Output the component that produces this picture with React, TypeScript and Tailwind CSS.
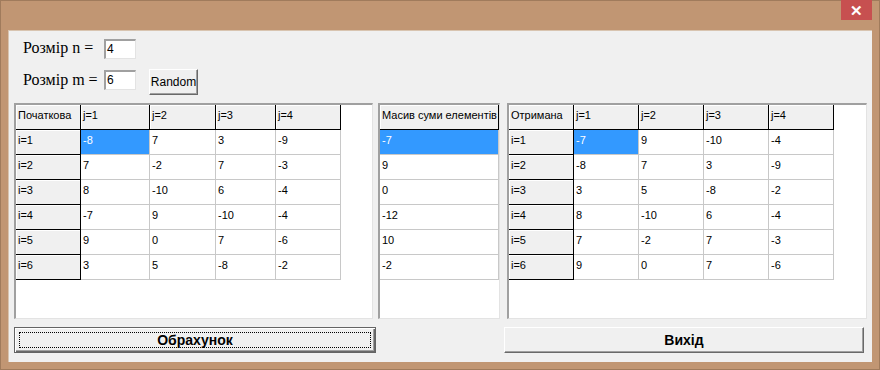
import React from "react";

const initial = [
  ["-8", "7", "3", "-9"],
  ["7", "-2", "7", "-3"],
  ["8", "-10", "6", "-4"],
  ["-7", "9", "-10", "-4"],
  ["9", "0", "7", "-6"],
  ["3", "5", "-8", "-2"],
];

const result = [
  ["-7", "9", "-10", "-4"],
  ["-8", "7", "3", "-9"],
  ["3", "5", "-8", "-2"],
  ["8", "-10", "6", "-4"],
  ["7", "-2", "7", "-3"],
  ["9", "0", "7", "-6"],
];

const sums = ["-7", "9", "0", "-12", "10", "-2"];

// fixed (grey) cell of a string grid
function FixedCell({ w, text }: { w: number; text: string }) {
  return (
    <div
      className="h-[25px] shrink-0 overflow-hidden whitespace-nowrap border-r border-b border-black bg-[#f0f0f0] pl-[2px] pt-[4px] text-[11px] leading-[13px] shadow-[inset_1px_1px_0_#ffffff]"
      style={{ width: w }}
    >
      {text}
    </div>
  );
}

function Cell({ w, text, selected }: { w: number; text: string; selected?: boolean }) {
  return (
    <div
      className={
        "h-[25px] shrink-0 overflow-hidden whitespace-nowrap border-r border-b border-[#c8c8c8] pl-[2px] pt-[4px] text-[11px] leading-[13px] " +
        (selected ? "bg-[#3399ff] text-white" : "bg-white text-black")
      }
      style={{ width: w }}
    >
      {text}
    </div>
  );
}

function MatrixGrid({ title, widths, rows }: { title: string; widths: number[]; rows: string[][] }) {
  return (
    <div className="flex h-full flex-col">
      <div className="flex">
        <FixedCell w={widths[0]} text={title} />
        {widths.slice(1).map((w, j) => (
          <FixedCell key={j} w={w} text={`j=${j + 1}`} />
        ))}
      </div>
      {rows.map((row, i) => (
        <div className="flex" key={i}>
          <FixedCell w={widths[0]} text={`i=${i + 1}`} />
          {row.map((v, j) => (
            <Cell key={j} w={widths[j + 1]} text={v} selected={i === 0 && j === 0} />
          ))}
        </div>
      ))}
    </div>
  );
}

function GridBox({ width, children }: { width: number; children: React.ReactNode }) {
  return (
    <div
      className="h-[216px] shrink-0 overflow-hidden border-t-2 border-l-2 border-r border-b border-t-[#a0a0a0] border-l-[#a0a0a0] border-r-[#e3e3e3] border-b-[#e3e3e3] bg-white"
      style={{ width }}
    >
      {children}
    </div>
  );
}

export default function App() {
  return (
    <div className="flex h-[370px] w-[880px] flex-col border border-[#a07b5c] bg-[#c19673] font-['Liberation_Sans',Arial,sans-serif] text-black">
      {/* title bar */}
      <div className="flex h-[29px] shrink-0 justify-end pr-[7px]">
        <div className="flex h-[20px] w-[31px] items-center justify-center bg-[#c75050] text-[15px] font-bold leading-none text-white -mt-px">
          ✕
        </div>
      </div>

      {/* client area */}
      <div className="mx-[7px] mb-[7px] flex flex-1 flex-col bg-[#f0f0f0] shadow-[inset_1px_1px_0_#d8c4b0]">
        <div className="flex h-[29px] items-end pl-[15px]">
          <div className="w-[81px] pb-[2px] font-['Liberation_Serif','Times_New_Roman',serif] text-[16px] leading-[18px]">
            Розмір n =
          </div>
          <div className="h-[20px] w-[32px] border-t-2 border-l-2 border-r border-b border-t-[#a0a0a0] border-l-[#a0a0a0] border-r-[#e3e3e3] border-b-[#e3e3e3] bg-white pl-[1px] pt-[1px] text-[12px] leading-[14px]">
            4
          </div>
        </div>

        <div className="mt-[10px] flex h-[26px] items-start pl-[15px]">
          <div className="mt-[2px] w-[81px] font-['Liberation_Serif','Times_New_Roman',serif] text-[16px] leading-[18px]">
            Розмір m =
          </div>
          <div className="mt-[1px] h-[20px] w-[32px] border-t-2 border-l-2 border-r border-b border-t-[#a0a0a0] border-l-[#a0a0a0] border-r-[#e3e3e3] border-b-[#e3e3e3] bg-white pl-[1px] pt-[1px] text-[12px] leading-[14px]">
            6
          </div>
          <button className="ml-[13px] h-[26px] w-[49px] border border-t-white border-l-white border-r-[#696969] border-b-[#696969] bg-[#f0f0f0] text-[12px] leading-none shadow-[inset_-1px_-1px_0_#a0a0a0]">
            Random
          </button>
        </div>

        {/* grids */}
        <div className="mt-[8px] flex pl-[6px]">
          <GridBox width={359}>
            <MatrixGrid title="Початкова" widths={[65, 69, 66, 60, 65]} rows={initial} />
          </GridBox>
          <div className="ml-[5px]">
            <GridBox width={122}>
              <div className="flex flex-col">
                <FixedCell w={119} text="Масив суми елементів" />
                {sums.map((s, i) => (
                  <Cell key={i} w={119} text={s} selected={i === 0} />
                ))}
              </div>
            </GridBox>
          </div>
          <div className="ml-[7px]">
            <GridBox width={360}>
              <MatrixGrid title="Отримана" widths={[65, 65, 65, 65, 65]} rows={result} />
            </GridBox>
          </div>
        </div>

        {/* bottom buttons */}
        <div className="mt-[8px] flex pl-[6px]">
          <button className="relative h-[26px] w-[362px] border border-[#646464] bg-[#f0f0f0] shadow-[inset_1px_1px_0_#ffffff,inset_-1px_-1px_0_#696969,inset_-2px_-2px_0_#a0a0a0] text-[14px] font-bold leading-none">
            <span className="absolute inset-[4px] border border-dotted border-black" />
            Обрахунок
          </button>
          <button className="ml-[128px] h-[26px] w-[360px] border border-t-white border-l-white border-r-[#696969] border-b-[#696969] bg-[#f0f0f0] shadow-[inset_-1px_-1px_0_#a0a0a0] text-[14px] font-bold leading-none">
            Вихід
          </button>
        </div>
      </div>
    </div>
  );
}
